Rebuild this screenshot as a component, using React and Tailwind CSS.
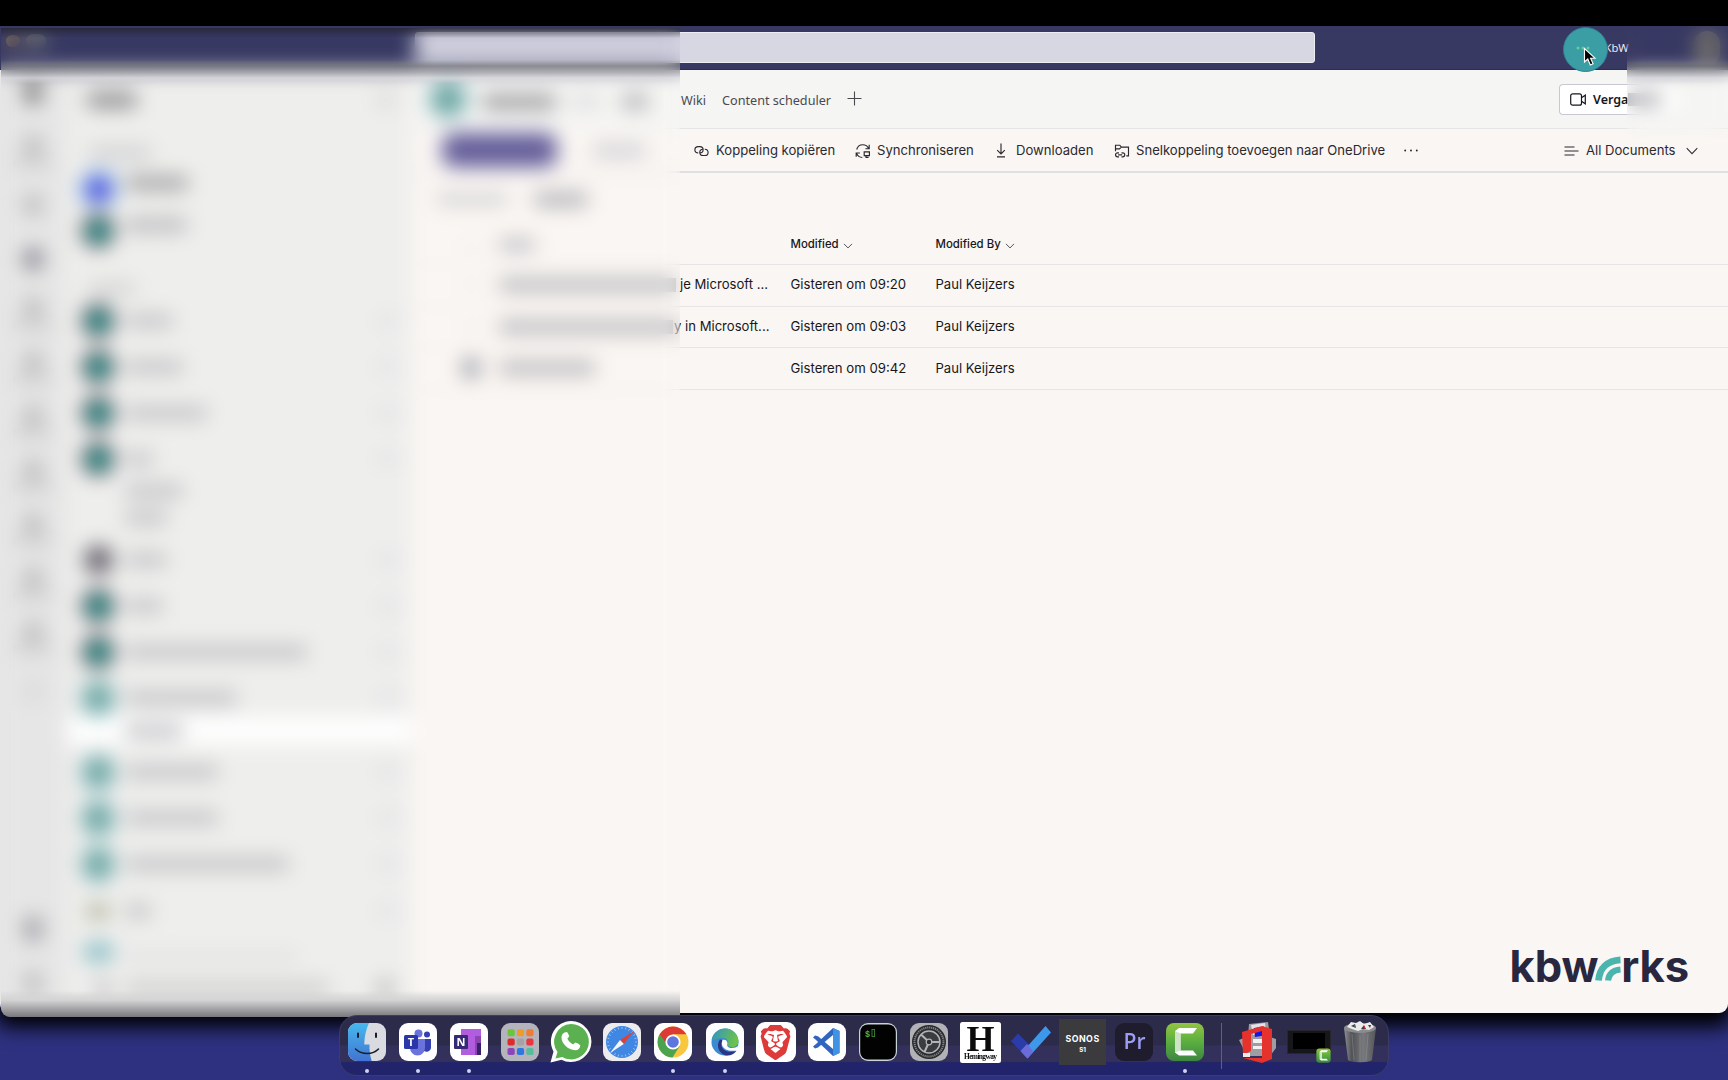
import React from 'react';
import { SiBrave } from 'react-icons/si';

const TEAMS = [
  { kind: 'dark', w: 50 },
  { kind: 'dark', w: 60 },
  { kind: 'dark', w: 84 },
  { kind: 'dark', w: 30 },
  { kind: 'sub', w: 60 },
  { kind: 'sub2', w: 44 },
  { kind: 'gray', w: 44 },
  { kind: 'dark', w: 40 },
  { kind: 'dark', w: 184 },
  { kind: 'light', w: 114 },
  { kind: 'selected', w: 60 },
  { kind: 'light', w: 95 },
  { kind: 'light', w: 95 },
  { kind: 'light', w: 166 },
  { kind: 'small', w: 28 },
];

const ROW_HEIGHT = {
  dark: 'h-[46px]',
  gray: 'h-[46px]',
  light: 'h-[46px]',
  small: 'h-[48px]',
  sub: 'h-[26px] -mt-[4px] mb-[1px]',
  sub2: 'h-[32px] pb-[7px]',
  selected: 'h-[27px] -mt-[4px] mb-[5px] rounded-[4px] bg-white',
};

function Avatar({ kind }) {
  if (kind === 'dark')
    return (
      <span className="flex h-[34px] w-[32px] items-center justify-center rounded-full bg-[#56505c]">
        <span className="h-[17px] w-[17px] rounded-full bg-[#00b3a0]" />
      </span>
    );
  if (kind === 'gray') return <span className="h-[30px] w-[29px] rounded-full bg-[#6c6873]" />;
  if (kind === 'light')
    return (
      <span className="flex h-[37px] w-[37px] items-center justify-center rounded-full bg-[#8fc3c8]">
        <span className="h-[26px] w-[26px] rounded-full bg-[#6fa5a1]" />
      </span>
    );
  if (kind === 'small') return <span className="h-[13px] w-[24px] rounded-full bg-[#a9ac90]" />;
  return <span />;
}

function TeamRow({ kind, w }) {
  const plain = kind === 'sub' || kind === 'sub2' || kind === 'selected';
  return (
    <div className={`flex shrink-0 items-center pl-[15px] ${ROW_HEIGHT[kind]}`}>
      <span className="flex w-[34px] justify-center">
        <Avatar kind={kind} />
      </span>
      <span className="ml-[9px] h-[14px] rounded-full bg-[#c4c4c8]" style={{ width: w }} />
      {!plain && <span className="mr-[15px] ml-auto h-[12px] w-[20px] rounded-full bg-[#e1e1e6]" />}
    </div>
  );
}

function RailItem({ tone = 'bg-[#bebebf]', label = true }) {
  return (
    <div className="flex h-[54px] shrink-0 flex-col items-center justify-center pb-[4px]">
      <span className={`h-[24px] w-[20px] rounded-full ${tone}`} />
      {label && <span className="h-[10px] w-[40px] rounded-full bg-[#cfcfcf]" />}
    </div>
  );
}

function Rail() {
  return (
    <nav className="flex w-[66px] shrink-0 flex-col bg-[#e6e6e6]">
      <div className="flex h-[56px] items-center justify-center pb-[12px]">
        <span className="h-[26px] w-[18px] rounded-full bg-[#7d7d7d]" />
      </div>
      <RailItem />
      <RailItem label={false} />
      <RailItem tone="bg-[#8b8b95]" label={false} />
      <RailItem />
      <RailItem />
      <RailItem />
      <RailItem />
      <RailItem />
      <RailItem />
      <RailItem />
      <RailItem tone="bg-[#dadadb]" label={false} />
      <div className="mt-auto flex h-[130px] flex-col items-center gap-[28px] pt-[32px]">
        <span className="h-[28px] w-[20px] rounded-full bg-[#a8a8ae]" />
        <span className="h-[24px] w-[18px] rounded-full bg-[#bcbcbc]" />
      </div>
    </nav>
  );
}

function Sidebar() {
  return (
    <aside className="flex w-[346px] shrink-0 flex-col bg-[#eeeeec]">
      <div className="flex h-[60px] items-center justify-between pr-[16px] pl-[20px]">
        <span className="h-[16px] w-[52px] rounded-full bg-[#919195]" />
        <span className="h-[16px] w-[20px] rounded-full bg-[#dbdbd8]" />
      </div>
      <div className="flex h-[38px] items-center pt-[8px] pl-[22px]">
        <span className="h-[12px] w-[64px] rounded-full bg-[#cdcdcf]" />
      </div>
      <div className="flex h-[42px] items-center pl-[14px]">
        <span className="flex h-[38px] w-[37px] items-center justify-center rounded-full bg-[#83b8e6]">
          <span className="h-[23px] w-[23px] rounded-full bg-[#564ae0]" />
        </span>
        <span className="mb-[13px] ml-[8px] h-[14px] w-[64px] rounded-full bg-[#a2a2a5]" />
      </div>
      <div className="flex h-[42px] items-center pl-[15px]">
        <span className="flex w-[34px] justify-center">
          <Avatar kind="dark" />
        </span>
        <span className="mb-[12px] ml-[9px] h-[14px] w-[64px] rounded-full bg-[#bbbbbf]" />
      </div>
      <div className="flex h-[46px] items-center pt-[27px] pl-[22px]">
        <span className="h-[11px] w-[48px] rounded-full bg-[#cfcfd1]" />
      </div>
      {TEAMS.map((t, i) => (
        <TeamRow key={i} {...t} />
      ))}
      <div className="flex h-[34px] items-center pl-[17px]">
        <span className="h-[20px] w-[31px] rounded-full bg-[#8dbfc7]" />
        <span className="mt-[8px] ml-[10px] h-[9px] w-[174px] bg-[#dfdfe1]" />
      </div>
      <div className="flex h-[38px] items-center pl-[30px]">
        <span className="h-[16px] w-[14px] rounded-full bg-[#b5b5ba]" />
        <span className="ml-[14px] h-[12px] w-[206px] rounded-full bg-[#cacaca]" />
        <span className="mr-[18px] ml-auto h-[18px] w-[18px] rounded-full bg-[#b9b9b7]" />
      </div>
    </aside>
  );
}

function LinkIcon() {
  return (
    <svg width="15" height="12" viewBox="0 0 15 12" fill="none" stroke="#2b2930" strokeWidth="1.15">
      <path d="M4.200 7.900C2.200 7.900.9 6.600.9 4.700S2.200 1.600 4.200 1.600h1.700c2 0 3.200 1.300 3.200 3.100s-1.200 3.200-3.200 3.200" />
      <path d="M10.800 4.200c2 .1 3.300 1.400 3.300 3.200s-1.300 3.100-3.200 3.100H9.100c-2 0-3.300-1.300-3.300-3.100s1.200-3.200 3.100-3.200" />
    </svg>
  );
}

function SyncIcon() {
  return (
    <svg width="16" height="16" viewBox="0 0 16 16" fill="none" stroke="#2b2930" strokeWidth="1.15">
      <path d="M1.700 6.500C2.400 3.700 4.800 1.700 7.800 1.700c2.600 0 4.800 1.500 5.800 3.700M14.200 1.800v3.900h-3.800" />
      <path d="M1.200 13.800V10h3.700M1.600 10.400c.9 2.300 3 4 5.700 4.100" />
      <path d="M9.200 8.900h5.200v3.700H9.200zM11 12.600v1.800h2.600" />
    </svg>
  );
}

function DownloadIcon() {
  return (
    <svg width="10" height="15" viewBox="0 0 10 15" fill="none" stroke="#2b2930" strokeWidth="1.150">
      <path d="M5 .500v10.300M1.200 7.200 5 11l3.800-3.800M1 13.900h8" />
    </svg>
  );
}

function ShortcutIcon() {
  return (
    <svg width="16" height="16" viewBox="0 0 16 16" fill="none" stroke="#2b2930" strokeWidth="1.150">
      <path d="M1.500 8.300V2.200h4.300l1.500 1.900h7.200v8.800h-2.200M1.500 5.800h4l1.800-1.700" />
      <path d="M5 9.800H3.600a2 2 0 0 0 0 4.100H5M7.500 9.800h1.200a2 2 0 0 1 0 4.100H7.500M4.200 11.900h4" />
    </svg>
  );
}

function Chevron({ className = '' }) {
  return (
    <svg className={className} width="12" height="8" viewBox="0 0 12 8" fill="none" stroke="#33313a" strokeWidth="1.1">
      <path d="M.7 1.200 6 6.600l5.300-5.400" />
    </svg>
  );
}

function TitleBar() {
  return (
    <header className="flex h-[44px] shrink-0 items-center border-b border-[#292b58] bg-[#383963]">
      <div className="flex w-[415px] items-center gap-[6px] pb-[14px] pl-[6px]">
        <span className="h-[12px] w-[14px] rounded-full bg-[#8d7a58]" />
        <span className="h-[14px] w-[20px] rounded-full bg-[#7b7f78]" />
      </div>
      <div className="mb-[1px] h-[31px] w-[900px] rounded-[3px] border border-[#ededf4] bg-[#d7d7e4]" />
      <div className="mt-[2px] ml-[289.500px] font-['Noto_Sans'] text-[11.200px] whitespace-nowrap text-[#e8e8f0]">KbW</div>
      <div className="mr-[8px] ml-auto h-[34px] w-[26px] rounded-full bg-[#6f6d6a]" />
    </header>
  );
}

function ChannelBar() {
  return (
    <div className="flex h-[59px] shrink-0 items-center border-b border-[#e5e5e6] bg-[#f5f5f3] font-['Noto_Sans'] text-[12.650px] text-[#4b4950]">
      <span className="ml-[13px] flex h-[40px] w-[40px] items-center justify-center rounded-full bg-[#93c6ca]">
        <span className="h-[28px] w-[28px] rounded-full bg-[#6da49f]" />
      </span>
      <span className="mt-[5px] ml-[13px] h-[14px] w-[76px] rounded-full bg-[#97979a]" />
      <span className="mt-[4px] ml-[14px] h-[11px] w-[30px] rounded-full bg-[#d9d9dc]" />
      <span className="mt-[4px] ml-[20px] h-[15px] w-[28px] rounded-full bg-[#b0b0b6]" />
      <span className="ml-auto" />
      <div className="flex w-[1047px] shrink-0 items-center">
        <span className="w-[41px] pt-[2px]">Wiki</span>
        <span className="w-[124.500px] pt-[2px] whitespace-nowrap">Content scheduler</span>
        <svg width="15" height="15" viewBox="0 0 15 15" stroke="#4b4950" strokeWidth="1.100" className="mb-[1px]">
          <path d="M7.500 .5v14M.5 7.500h14" />
        </svg>
        <div className="ml-auto flex h-[31px] w-[118px] shrink-0 items-center rounded-l-[4px] border border-r-0 border-[#c9c8d2] bg-white pl-[10px] text-[#17161b]">
          <svg width="17" height="13" viewBox="0 0 17 13" fill="none" stroke="#17161b" strokeWidth="1.200">
            <rect x=".7" y=".8" width="10.800" height="11.400" rx="2" />
            <path d="M11.500 4.800 15.300 2.200v8.600L11.500 8.200" />
          </svg>
          <span className="mt-[2px] ml-[6px] text-[12.500px] font-semibold">Verga</span>
          <span className="h-[13px] w-[34px] rounded-r-full bg-[#b3b3b8]" />
        </div>
        <span className="h-[31px] w-[51px]" />
      </div>
    </div>
  );
}

function CommandBar() {
  return (
    <div className="flex h-[44px] shrink-0 items-center border-b-2 border-[#e0dfe1] bg-[#faf6f3] font-['Inter'] text-[13.100px] whitespace-nowrap text-[#2b2930]">
      <span className="ml-[27px] h-[34px] w-[115px] rounded-[12px] bg-[#645e9a]" />
      <span className="ml-[34px] h-[13px] w-[56px] rounded-full bg-[#d0d0d3]" />
      <span className="ml-auto" />
      <div className="flex w-[1034px] shrink-0 items-center pt-[2px]">
        <div className="flex w-[161px] items-center gap-[7px]"><LinkIcon />Koppeling kopiëren</div>
        <div className="flex w-[141px] items-center gap-[6px]"><SyncIcon />Synchroniseren</div>
        <div className="flex w-[118px] items-center gap-[10px]"><DownloadIcon />Downloaden</div>
        <div className="flex w-[290px] items-center gap-[6px]"><ShortcutIcon />Snelkoppeling toevoegen naar OneDrive</div>
        <svg width="14" height="3" viewBox="0 0 14 3" fill="#2b2930">
          <circle cx="1.200" cy="1.500" r=".95" /><circle cx="7" cy="1.500" r=".95" /><circle cx="12.800" cy="1.500" r=".95" />
        </svg>
        <div className="ml-auto flex w-[164px] items-center">
          <svg width="15" height="10" viewBox="0 0 15 10" stroke="#2b2930" strokeWidth="1.200">
            <path d="M.5 1h10M.5 5h14M.5 9h10" />
          </svg>
          <span className="ml-[7px]">All Documents</span>
          <Chevron className="ml-[10px]" />
        </div>
      </div>
    </div>
  );
}

const FILES = [
  { tail: 'je Microsoft ...', pad: 'ml-[1px]', bar: 178, modified: 'Gisteren om 09:20' },
  { tail: 'y in Microsoft...', pad: '-ml-[5px]', bar: 175, modified: 'Gisteren om 09:03' },
  { tail: '', pad: '', bar: 97, modified: 'Gisteren om 09:42' },
];

function FileRow({ tail, pad, bar, modified, last }) {
  return (
    <div className="flex h-[41.600px] shrink-0 items-center border-b border-[#e6e4e4] text-[13.100px] whitespace-nowrap text-[#17161b]">
      <span className="flex w-[83px] justify-center pl-[28px]">
        <span className={last ? 'h-[22px] w-[20px] rounded-full bg-[#a2a4ac]' : 'h-[16px] w-[16px] rounded-full border border-[#dcdad8]'} />
      </span>
      <span className="flex w-[181px] items-center">
        <span className="h-[14px] rounded-l-full bg-[#bababd]" style={{ width: bar }} />
      </span>
      <span className="w-[111.500px]"><span className={`inline-block ${pad}`}>{tail}</span></span>
      <span className="w-[145px] text-[13.200px]">{modified}</span>
      <span>Paul Keijzers</span>
    </div>
  );
}

function Main() {
  return (
    <main className="flex min-w-0 flex-1 flex-col bg-[#faf6f3] pl-[3px]">
      <ChannelBar />
      <CommandBar />
      <div className="flex h-[52px] shrink-0 items-center gap-[24px] pl-[20px]">
        <span className="h-[13px] w-[74px] rounded-full bg-[#d4d4d6]" />
        <span className="h-[15px] w-[56px] rounded-full bg-[#b5b5ba]" />
      </div>
      <div className="flex h-[40px] shrink-0 items-center border-b border-[#e6e4e4] font-['Inter'] text-[11.400px] font-medium text-[#17161b]">
        <span className="flex w-[83px] justify-center pl-[28px]">
          <span className="h-[16px] w-[16px] rounded-full border border-[#dcdad8]" />
        </span>
        <span className="w-[292.500px]"><span className="block h-[13px] w-[38px] rounded-full bg-[#c0c0c4]" /></span>
        <span className="flex w-[145px] items-center">Modified<Chevron className="mt-[3px] ml-[4px] h-[6px] w-[10px]" /></span>
        <span className="flex items-center">Modified By<Chevron className="mt-[3px] ml-[4px] h-[6px] w-[10px]" /></span>
      </div>
      <div className="flex flex-col font-['Inter']">
        {FILES.map((f, i) => (
          <FileRow key={i} {...f} last={i === 2} />
        ))}
      </div>
      <div className="mt-auto mr-[39px] mb-[21px] flex items-end justify-end font-['Inter'] text-[43.500px] leading-[52px] font-bold text-[#29263f]">
        <span className="tracking-[-0.100px]">kbw</span>
        <svg className="-ml-[3px] mb-[11px]" width="26" height="26" viewBox="0 0 26 26" fill="none">
          <path d="M3.500 25.500C4.500 13.500 12 5.500 25.500 4.800" stroke="#4bb5ad" strokeWidth="6.800" />
          <path d="M13 25.500c.8-6.800 4.500-10.300 12.500-11" stroke="#4bb5ad" strokeWidth="6" />
        </svg>
        <span className="tracking-[-0.100px]">rks</span>
      </div>
    </main>
  );
}

function Tile({ fill = '#fefefe', children }) {
  return (
    <svg width="40" height="40" viewBox="0 0 40 40" className="overflow-visible">
      <rect x="1" y="1" width="38" height="38" rx="9" fill={fill} />
      {children}
    </svg>
  );
}

function Camtasia({ size }) {
  return (
    <svg width={size} height={size} viewBox="0 0 40 40">
      <defs>
        <linearGradient id={`cam${size}`} x1="0" y1="0" x2="0" y2="1">
          <stop offset="0" stopColor="#93c442" /><stop offset=".5" stopColor="#5aae40" /><stop offset="1" stopColor="#3d8540" />
        </linearGradient>
      </defs>
      <rect x="1" y="1" width="38" height="38" rx="8" fill={`url(#cam${size})`} />
      <path d="M10 9 14 6h18l-4 5.500H15.500v17H28l4 5H14l-4-3z" fill="#fff" />
      <path d="M10 9 15.500 11.500v17L10 30.500z" fill="#cfe3c8" />
    </svg>
  );
}

const ticks = Array.from({ length: 24 }, (_, i) => i * 15);
const launch = ['#6ac53b', '#f09a2c', '#ee7c35', '#dd2b2b', '#a3a3a3', '#e5383f', '#8c45b8', '#2e77e0', '#55bd9c'];

const DOCK = [
  { dot: true, el: (
    <Tile fill="#d9dbe0">
      <defs><linearGradient id="fin" x1="0" y1="0" x2="0" y2="1"><stop offset="0" stopColor="#46b9ee" /><stop offset="1" stopColor="#4174d2" /></linearGradient></defs>
      <path d="M10 1h12c-3 7-4.500 13-4.700 21.500h5.200c-.2 6 .5 11 2.200 16.500H10a9 9 0 0 1-9-9V10a9 9 0 0 1 9-9z" fill="url(#fin)" />
      <path d="M11 11.500v3.500M29 11.500v3.500" stroke="#1b1b25" strokeWidth="2" strokeLinecap="round" />
      <path d="M8.500 27c6.500 6 17 6 23 0" stroke="#1b1b25" strokeWidth="1.500" fill="none" strokeLinecap="round" />
    </Tile>) },
  { dot: true, el: (
    <Tile>
      <circle cx="20.500" cy="11.500" r="4" fill="#6a73dc" /><circle cx="29" cy="12.500" r="3" fill="#3340ae" />
      <path d="M25 17h8v8a4.500 4.500 0 0 1-8 3z" fill="#3340ae" />
      <path d="M12 17h15v9a7.500 7.500 0 0 1-15 0z" fill="#6a73dc" />
      <rect x="6" y="13" width="14" height="14" rx="1.500" fill="#2a37a8" />
      <text x="13" y="24" textAnchor="middle" fontSize="11" fontWeight="700" fill="#fff" fontFamily="Open Sans">T</text>
    </Tile>) },
  { dot: true, el: (
    <Tile>
      <path d="M12 7h20v26H12z" fill="#b25ce0" /><path d="M26 14h6v19h-6z" fill="#8a45b0" /><path d="M28 21h4v12h-4z" fill="#39206b" />
      <rect x="5" y="13" width="14" height="14" rx="1" fill="#372a75" />
      <text x="12" y="24" textAnchor="middle" fontSize="11" fontWeight="700" fill="#fff" fontFamily="Open Sans">N</text>
    </Tile>) },
  { el: (
    <Tile fill="#b4b4bc">
      {launch.map((c, i) => <rect key={i} x={7.500 + (i % 3) * 9.400} y={7.200 + Math.floor(i / 3) * 9.400} width="7.200" height="7" rx="1.800" fill={c} />)}
    </Tile>) },
  { el: (
    <svg width="42" height="42" viewBox="0 0 42 42" className="overflow-visible">
      <path d="M21 0a20.500 20.500 0 1 1-9.500 38.700L.5 41.500l3-11A20.500 20.500 0 0 1 21 0z" fill="#fff" />
      <path d="M21 3a17.700 17.700 0 1 1-8.700 33L5.500 37.500l2-6.500A17.700 17.700 0 0 1 21 3z" fill="#5bb150" />
      <path d="M14.500 11.500 17 11c1 1.200 1.800 2.700 2.200 4.200l-1.800 2.600c1.200 2.300 3.200 4.400 5.700 5.600l2.200-2c1.900.5 3.700 1.500 5 2.800-.3 3.200-2.200 5-5 5C18 29 11.500 22.500 11.500 16.500c0-2.200 1-4 3-5z" fill="#fff" />
    </svg>) },
  { el: (
    <Tile fill="#ececee">
      <circle cx="20" cy="20" r="16" fill="#3f87e2" />
      {ticks.map((a) => <path key={a} d="M20 5v2" stroke="#cfe3fa" strokeWidth=".6" transform={`rotate(${a} 20 20)`} />)}
      <path d="M32 9 21.800 22 18 18z" fill="#e04038" /><path d="M8 31 18 18l3.800 4z" fill="#f4f6fa" />
    </Tile>) },
  { dot: true, el: (
    <Tile>
      <circle cx="20" cy="20" r="15.500" fill="#f8c73e" />
      <path d="M20 20 6.600 12.300A15.500 15.500 0 0 0 19.500 35.500L26.700 24z" fill="#4ba350" />
      <path d="M6.600 12.300A15.500 15.500 0 0 1 33.400 12.300H20l-6 10z" fill="#dd3a35" />
      <circle cx="20" cy="20" r="7.600" fill="#fff" /><circle cx="20" cy="20" r="5.800" fill="#5f74dc" />
    </Tile>) },
  { dot: true, el: (
    <Tile>
      <defs><linearGradient id="edge" x1="0" y1="0" x2="1" y2=".3"><stop offset="0" stopColor="#2e93c8" /><stop offset="1" stopColor="#6cc24a" /></linearGradient></defs>
      <circle cx="20" cy="20" r="13.500" fill="#3c8ad2" />
      <path d="M6.700 18A13.500 13.500 0 0 1 33.500 19c0 4-3 6-7 6-3 0-4-1-3.500-3 .8-3-1-6-5-6-5 0-9 2-11.300 2z" fill="url(#edge)" />
      <path d="M15 17.500c-4 5-2 13 5 15.800 5 1 9-1 11.500-4.500-6 2.500-14 .5-15-5-.3-2 .2-4 1-5.500z" fill="#2a3585" />
      <path d="M17.500 18c2.500-1 5 .5 5 3.500-1 2.500.5 4.500 4.500 4.500 3 0 4.500-.8 6-2l-1.300 4c-5 2-13 .5-14.700-5-.3-2 0-3.500.5-5z" fill="#fff" />
    </Tile>) },
  { el: (
    <span className="flex h-[40px] w-[40px] items-center justify-center rounded-[9px] bg-white">
      <SiBrave size={35} color="#de3a3a" />
    </span>) },
  { el: (
    <Tile>
      <path d="m26 6 6.500 3v22L26 34 8.500 17.500 6 15.500l2-2 3 .8L26 27V13L11 25.500l-3 1-2-2 3-2.500z" fill="#3166c0" />
      <path d="m26 6 6.500 3v22L26 34z" fill="#3f92e4" />
    </Tile>) },
  { el: (
    <Tile fill="#c8d4d8">
      <rect x="2.200" y="2.400" width="35.600" height="35" rx="7.500" fill="#020202" />
      <text x="7" y="14.500" fontSize="8.500" fontWeight="700" fill="#58b83e" fontFamily="Liberation Mono">$</text>
      <rect x="14" y="7.500" width="2.600" height="7" fill="none" stroke="#3f8a33" strokeWidth=".9" />
    </Tile>) },
  { el: (
    <Tile fill="#b0b2b5">
      <circle cx="20" cy="20" r="17" fill="#2a2b2e" /><circle cx="20" cy="20" r="14.500" fill="none" stroke="#85878b" strokeWidth="2" strokeDasharray="1.200 .8" />
      <circle cx="20" cy="20" r="11" fill="#3a3c40" stroke="#b2b4b8" strokeWidth="1.500" />
      <path d="M20 20 12 12.500M20 20h11M20 20l-4.500 10" stroke="#b2b4b8" strokeWidth="2" />
      <circle cx="20" cy="20" r="2.800" fill="#2a2b2e" stroke="#b2b4b8" strokeWidth="1.200" />
    </Tile>) },
  { el: (
    <svg width="41" height="41" viewBox="0 0 41 41" className="overflow-visible">
      <rect width="41" height="41" rx="2.500" fill="#fff" />
      <text x="20.500" y="28.500" textAnchor="middle" fontSize="36" fontWeight="700" fill="#0c0c0c" fontFamily="Liberation Serif">H</text>
      <text x="20.500" y="37.300" textAnchor="middle" fontSize="7.400" fontWeight="700" fill="#0c0c0c" textLength="33" fontFamily="Liberation Serif">Hemingway</text>
    </svg>) },
  { el: (
    <svg width="42" height="40" viewBox="0 0 42 40">
      <path d="m1 19 7-7.500L22.500 26 17 36.500z" fill="#2b3ca8" />
      <path d="M17.500 36.500 12 30.500 35.500 4 41 10.500z" fill="#3e98ea" /><path d="M10.500 29 17 22l6.500 7.500-6 7z" fill="#6b6cd8" />
    </svg>) },
  { el: (
    <span className="flex h-[46px] w-[47px] shrink-0 flex-col items-center justify-center gap-[3px] bg-[#3b3b3d] pt-[4px] font-['Inter'] leading-none font-bold text-white">
      <span className="text-[8.800px] tracking-[0.500px]">SONOS</span>
      <span className="text-[6.200px]">S1</span>
    </span>) },
  { el: (
    <Tile fill="#1e1c2d">
      <text x="20.500" y="27" textAnchor="middle" fontSize="21" fontWeight="600" fill="#9a9df0" fontFamily="Open Sans">Pr</text>
    </Tile>) },
  { dot: true, el: <Camtasia size={40} /> },
];

const DOCK_RIGHT = [
  (
    <svg width="40" height="42" viewBox="0 0 40 42">
      <path d="m11 3 19-2 2 15 6 2v9l-6 8H8l-2-6L1 19l9-4z" fill="#9d9da3" />
      <path d="m13 4 14-2 1 10-13 2z" fill="#e4e4e8" /><path d="m16 7 10-1.500v9L17 16z" fill="#1616e8" />
      <path d="M15 18h11v4H15zM15 25h11v3H15z" fill="#f2f2f2" />
      <path d="M4 11 24 5l10 3v30l-10 4L5 37l19 0V10l-11 3v17l-8 4z" fill="#e5322d" />
      <path d="M5 32h7v4H5z" fill="#ececec" />
    </svg>
  ),
  (
    <span className="relative h-[42px] w-[44px]">
      <span className="absolute top-[9px] left-0 h-[24px] w-[44px] border border-[#26262c] bg-[#17171b] p-[2px]">
        <span className="mx-auto block h-[16px] w-[32px] bg-black" />
      </span>
      <span className="absolute right-0 bottom-0"><Camtasia size={15} /></span>
    </span>
  ),
  (
    <svg width="34" height="44" viewBox="0 0 34 44">
      <defs><linearGradient id="bin" x1="0" y1="0" x2="1" y2="0"><stop offset="0" stopColor="#8e9094" /><stop offset=".25" stopColor="#4f5154" /><stop offset=".6" stopColor="#77797c" /><stop offset="1" stopColor="#55575a" /></linearGradient></defs>
      <path d="M1 8h32l-4 32c-3 3-21 3-24 0z" fill="url(#bin)" />
      <ellipse cx="17" cy="8" rx="16" ry="5" fill="#8a8c90" />
      <path d="m4 7 4-5 5 1 4-2 4 3 6-2 4 5-5 3-6-1-5 2-6-2z" fill="#ecebe9" />
      <path d="m8 6 4-2 1 4zM18 9l3-4 2 4zM25 5l3 0-1 3z" fill="#3b3b45" /><path d="m20 6 2 0 0 3z" fill="#c23a3a" /><path d="m11 5 2 1-1 2z" fill="#3d8ab5" />
      <path d="M9 14l2 26M17 15v27M25 14l-2 26" stroke="#9b9da0" strokeWidth=".7" opacity=".6" />
    </svg>
  ),
];

function DockItem({ children, dot }) {
  return (
    <div className="flex w-[51.150px] shrink-0 flex-col items-center">
      <div className="flex h-[53px] items-center justify-center">{children}</div>
      {dot && <span className="h-[4px] w-[4px] rounded-full bg-[#cfd3f2]" />}
    </div>
  );
}

function Dock() {
  return (
    <div className="mx-auto flex h-[61px] w-[1050px] justify-start rounded-[18px] border border-[#3d3c63] bg-[linear-gradient(#2d2b4a_0_49%,#33305c_51%_77%,#21246a_79%)] pl-[1px]">
      {DOCK.map((d, i) => (
        <DockItem key={i} dot={d.dot}>{d.el}</DockItem>
      ))}
      <div className="flex w-[22px] shrink-0 justify-center pt-[7px]">
        <span className="h-[46px] w-px bg-[#5f5e8c]" />
      </div>
      {DOCK_RIGHT.map((el, i) => (
        <DockItem key={i}>{el}</DockItem>
      ))}
    </div>
  );
}

export default function App() {
  return (
    <div className="relative flex h-[1080px] w-[1728px] flex-col overflow-hidden bg-[#2e3180]">
      <div className="h-[26px] shrink-0 bg-black" />
      <div className="flex h-[987px] shrink-0 flex-col overflow-hidden rounded-b-[9px] shadow-[0_10px_20px_4px_#000]">
        <TitleBar />
        <div className="flex min-h-0 flex-1">
          <Rail />
          <Sidebar />
          <Main />
        </div>
      </div>
      <div className="relative z-20 pt-[1.500px]">
        <Dock />
      </div>

      <div className="absolute top-[28px] left-[1px] z-10 flex h-[989px] w-[678.500px] flex-col overflow-hidden rounded-bl-[9px] backdrop-blur-[10px]">
        <span className="h-[10px] bg-linear-to-b from-[#23232f]/70 to-transparent" />
        <span className="mt-[22px] h-[24px] bg-[linear-gradient(transparent,#77777bb0_25%,#a2a2a6b0_50%,#dcdce0a0_75%,transparent)]" />
        <span className="mt-auto h-[26px] bg-[linear-gradient(transparent,#d4d4d5_35%,#a9a9ac_65%,#79797d)]" />
      </div>
      <div className="absolute top-[26px] left-[1627px] z-10 h-[112px] w-[101px] backdrop-blur-[9px]">
        <div className="mt-[34px] h-[24px] bg-[linear-gradient(transparent,#68686cb0_25%,#a2a2a6b0_50%,#dcdce0a0_75%,transparent)]" />
      </div>

      <div className="absolute top-[27px] left-[1563px] z-10 flex h-[45px] w-[45px] items-center justify-center rounded-full border border-[#2d7f94] bg-[#3b9ea5]">
        <svg className="mr-[6px] mb-[4px]" width="14" height="4" viewBox="0 0 14 4" fill="#62cf97">
          <circle cx="2" cy="2" r="1.500" /><circle cx="7" cy="2" r="1.500" /><circle cx="12" cy="2" r="1.500" />
        </svg>
      </div>
      <svg className="absolute top-[47px] left-[1583px] z-10" width="14" height="20" viewBox="0 0 14 20">
        <path d="M1.500 1.500v13.500l3.300-3 2.500 6 2.800-1.200-2.500-5.600h4.400z" fill="#000" stroke="#fff" strokeWidth="1.100" />
      </svg>
    </div>
  );
}
